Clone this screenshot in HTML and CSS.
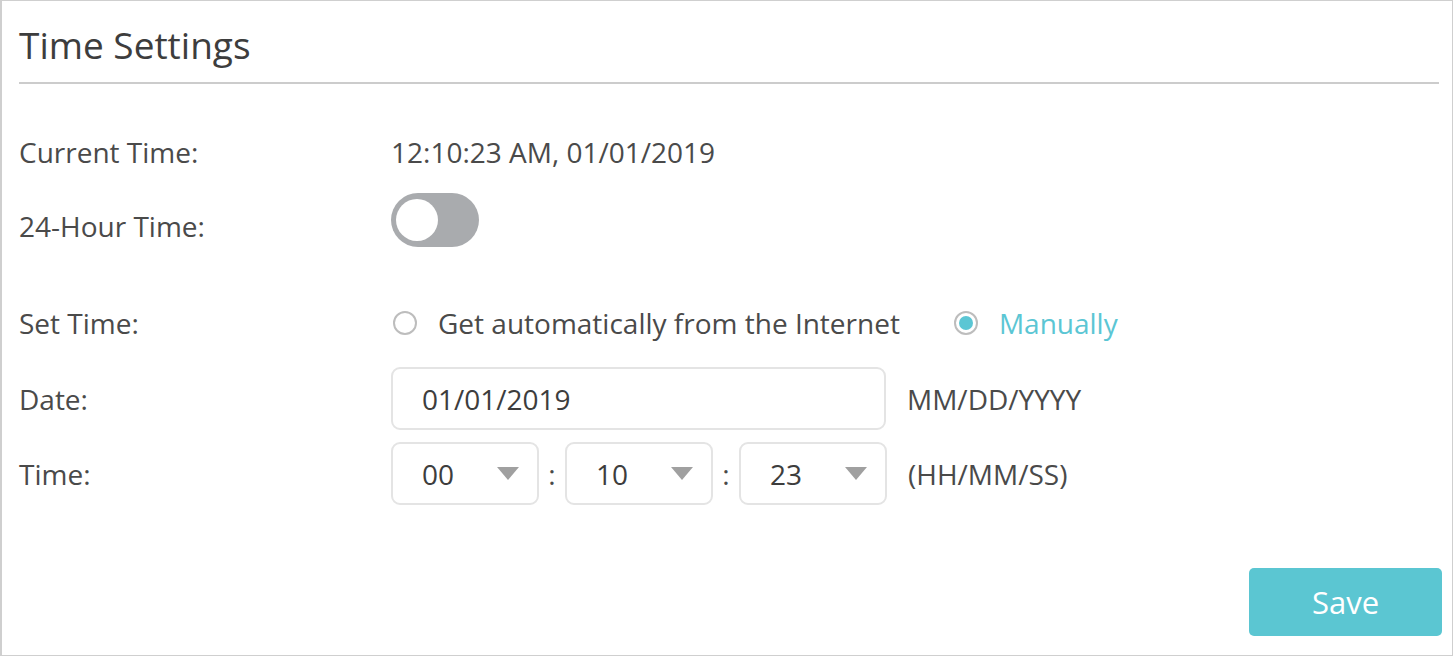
FILE: index.html
```html
<!DOCTYPE html>
<html lang="en">
<head>
    <meta charset="UTF-8">
    <meta name="viewport" content="width=device-width, initial-scale=1.0">
    <title>Time Settings</title>
    <link rel="stylesheet" href="styles.css">
</head>
<body>
    <div class="panel">
        <h2 class="title">Time Settings</h2>

        <div class="form">
            <div class="row row-current">
                <span class="label">Current Time:</span>
                <span class="value">12:10:23 AM, 01/01/2019</span>
            </div>

            <div class="row row-hour">
                <span class="label label-low">24-Hour Time:</span>
                <span class="toggle"><span class="knob"></span></span>
            </div>

            <div class="row row-set">
                <span class="label">Set Time:</span>
                <label class="radio">
                    <span class="circle"></span>
                    <span>Get automatically from the Internet</span>
                </label>
                <label class="radio checked">
                    <span class="circle"></span>
                    <span>Manually</span>
                </label>
            </div>

            <div class="row row-date">
                <span class="label">Date:</span>
                <div class="input">01/01/2019</div>
                <span class="hint">MM/DD/YYYY</span>
            </div>

            <div class="row row-time">
                <span class="label">Time:</span>
                <div class="select"><span>00</span><span class="arrow"></span></div>
                <span class="colon">:</span>
                <div class="select"><span>10</span><span class="arrow"></span></div>
                <span class="colon">:</span>
                <div class="select"><span>23</span><span class="arrow"></span></div>
                <span class="hint">(HH/MM/SS)</span>
            </div>
        </div>

        <div class="actions">
            <button class="save">Save</button>
        </div>
    </div>
</body>
</html>
```

FILE: styles.css
```css
html, body {
    margin: 0;
    padding: 0;
    background-color: #fff;
}

body {
    font-family: 'Open Sans', 'DejaVu Sans', sans-serif;
    color: #4a4a4a;
    font-size: 28px;
}

.panel {
    box-sizing: border-box;
    width: 1453px;
    height: 656px;
    border: 1px solid #cfcfcf;
    border-left-width: 2px;
    padding: 0 0 0 15px;
    display: flex;
    flex-direction: column;
}

.title {
    margin: 0 13px 0 2px;
    padding: 18px 0 12px 0;
    font-size: 37px;
    font-weight: normal;
    line-height: 51px;
    color: #3d3d3d;
    border-bottom: 2px solid #cccccc;
}

.form {
    display: flex;
    flex-direction: column;
}

.row {
    display: flex;
    align-items: center;
    height: 54px;
}

.row-current { margin-top: 41px; }
.row-hour { margin-top: 14px; }
.row-set { margin-top: 49px; }
.row-date { margin-top: 17px; height: 63px; }
.row-time { margin-top: 12px; height: 63px; }

.label {
    width: 374px;
    padding-left: 2px;
    box-sizing: border-box;
    flex-shrink: 0;
}

.label-low {
    padding-top: 12px;
}

.toggle {
    width: 88px;
    height: 54px;
    border-radius: 27px;
    background-color: #a9abae;
    display: flex;
    align-items: center;
    padding-left: 5px;
    box-sizing: border-box;
}

.knob {
    width: 42px;
    height: 42px;
    border-radius: 50%;
    background-color: #fff;
}

.radio {
    display: flex;
    align-items: center;
    gap: 21px;
    margin-left: 2px;
}

.radio + .radio {
    margin-left: 54px;
}

.circle {
    box-sizing: border-box;
    width: 24px;
    height: 24px;
    border: 2px solid #bdbdbd;
    border-radius: 50%;
    display: flex;
    align-items: center;
    justify-content: center;
}

.radio.checked {
    color: #5bc6d4;
}

.radio.checked .circle::after {
    content: '';
    width: 14px;
    height: 14px;
    border-radius: 50%;
    background-color: #5bc6d4;
}

.input {
    box-sizing: border-box;
    width: 495px;
    height: 63px;
    border: 2px solid #e4e4e4;
    border-radius: 9px;
    padding-left: 29px;
    display: flex;
    align-items: center;
    color: #3d3d3d;
}

.hint {
    margin-left: 21px;
}

.select {
    box-sizing: border-box;
    width: 148px;
    height: 63px;
    border: 2px solid #e4e4e4;
    border-radius: 9px;
    padding: 0 18px 0 29px;
    display: flex;
    align-items: center;
    justify-content: space-between;
    color: #3d3d3d;
}

.arrow {
    width: 0;
    height: 0;
    border-left: 11px solid transparent;
    border-right: 11px solid transparent;
    border-top: 13px solid #a0a0a0;
}

.colon {
    width: 26px;
    text-align: center;
}

.actions {
    display: flex;
    justify-content: flex-end;
    margin-top: 63px;
    padding-right: 10px;
}

.save {
    width: 193px;
    height: 68px;
    border: none;
    border-radius: 5px;
    background-color: #5bc6d2;
    color: #fff;
    font-family: 'Open Sans', 'DejaVu Sans', sans-serif;
    font-size: 31px;
    cursor: pointer;
}
```
